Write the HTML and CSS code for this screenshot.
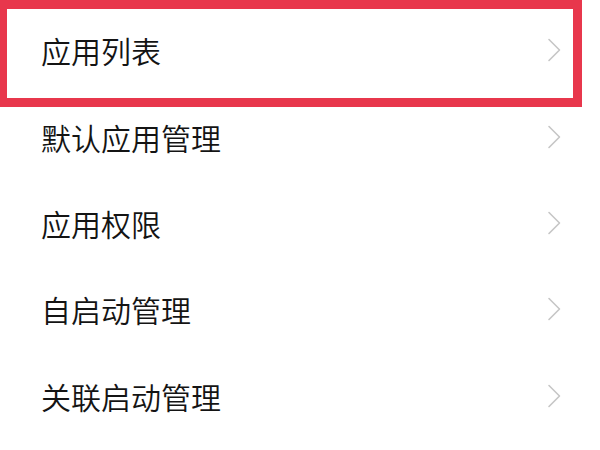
FILE: index.html
```html
<!DOCTYPE html>
<html lang="zh-CN">
<head>
<meta charset="utf-8">
<link rel="stylesheet" href="styles.css">
</head>
<body>
<div class="screen">
  <ul class="menu">
    <li class="row"><span class="label">应用列表</span><svg class="chev" viewBox="0 0 14 24" width="14" height="24"><polyline points="2,1.5 12.5,12 2,22.5"/></svg></li>
    <li class="row"><span class="label">默认应用管理</span><svg class="chev" viewBox="0 0 14 24" width="14" height="24"><polyline points="2,1.5 12.5,12 2,22.5"/></svg></li>
    <li class="row"><span class="label">应用权限</span><svg class="chev" viewBox="0 0 14 24" width="14" height="24"><polyline points="2,1.5 12.5,12 2,22.5"/></svg></li>
    <li class="row"><span class="label">自启动管理</span><svg class="chev" viewBox="0 0 14 24" width="14" height="24"><polyline points="2,1.5 12.5,12 2,22.5"/></svg></li>
    <li class="row"><span class="label">关联启动管理</span><svg class="chev" viewBox="0 0 14 24" width="14" height="24"><polyline points="2,1.5 12.5,12 2,22.5"/></svg></li>
  </ul>
  <div class="highlight"></div>
</div>
</body>
</html>
```
FILE: styles.css
```css
html, body {
  margin: 0;
  padding: 0;
  background: #ffffff;
}
.screen {
  position: relative;
  width: 600px;
  height: 450px;
  overflow: hidden;
  background: #ffffff;
}
.menu {
  list-style: none;
  margin: 0;
  padding: 7px 0 0 0;
}
.row {
  display: flex;
  align-items: center;
  justify-content: space-between;
  height: 86.4px;
  padding: 0 39px 0 41px;
  box-sizing: border-box;
}
.label {
  font-family: "Noto Sans CJK SC", "Noto Sans", sans-serif;
  font-size: 30px;
  font-weight: 350;
  color: #141414;
  line-height: 1;
}
.chev {
  display: block;
  fill: none;
  stroke: #c6c6c6;
  stroke-width: 1.6;
  stroke-linecap: round;
  stroke-linejoin: round;
}
.highlight {
  position: absolute;
  left: 0;
  top: 0;
  width: 582px;
  height: 107px;
  box-sizing: border-box;
  border-style: solid;
  border-color: #e8374c;
  border-width: 9px 9px 9px 7px;
}
```
